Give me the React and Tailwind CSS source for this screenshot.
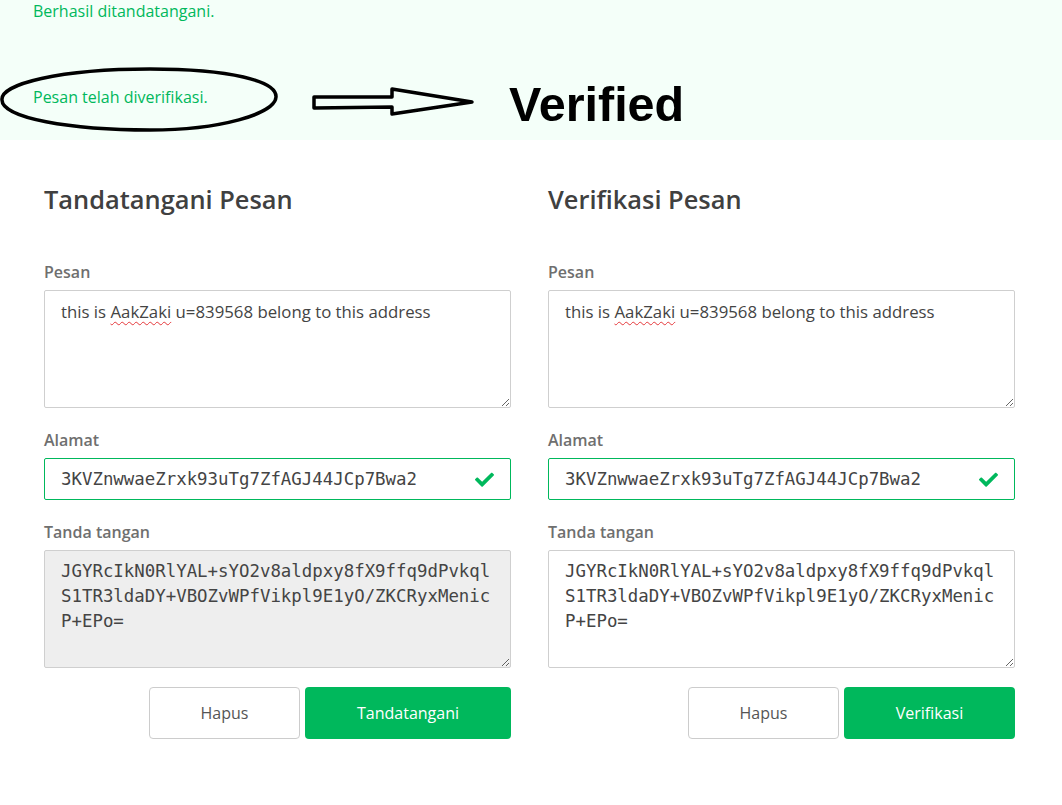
import React from "react";

const SANS = { fontFamily: '"Open Sans", "Noto Sans", Arial, sans-serif' };
const MONO = { fontFamily: '"DejaVu Sans Mono", "Liberation Mono", monospace' };

function Check() {
  return (
    <svg width="19" height="15" viewBox="0 0 512 400" className="shrink-0">
      <path
        fill="#00b85c"
        d="M173.9 389.8L7.5 223.4c-10-10-10-26.2 0-36.2l36.2-36.2c10-10 26.2-10 36.2 0L192 263.1 432.1 23c10-10 26.2-10 36.2 0l36.2 36.2c10 10 10 26.2 0 36.2L210.1 389.8c-10 10-26.2 10-36.2 0z"
      />
    </svg>
  );
}

function Panel({ title, sigBg, action, actionW }) {
  return (
    <div className="flex flex-col">
      <h2 className="text-[25.4px] font-semibold text-[#404040] leading-[34px] mt-[42px]" style={SANS}>
        {title}
      </h2>
      <label className="mt-[45px] text-[16px] font-semibold text-[#6f6f6f] leading-[22px]" style={SANS}>
        Pesan
      </label>
      <div
        className="mt-[7px] h-[118px] w-full border border-[#cfcfcf] rounded-[2px] bg-white px-4 pt-[9px] text-[16.8px] leading-[24px] text-[#444] resize overflow-auto"
        style={SANS}
      >
        this is{" "}
        <span className="underline decoration-wavy decoration-[#e5383b] decoration-1 underline-offset-[3px]">
          AakZaki
        </span>{" "}
        u=839568 belong to this address
      </div>
      <label className="mt-[21px] text-[16px] font-semibold text-[#6f6f6f] leading-[22px]" style={SANS}>
        Alamat
      </label>
      <div className="mt-[7px] h-[42px] w-full border border-[#00b85c] rounded-[2px] bg-white pl-4 pr-[16px] flex items-center justify-between">
        <span className="text-[17.4px] text-[#444]" style={MONO}>
          3KVZnwwaeZrxk93uTg7ZfAGJ44JCp7Bwa2
        </span>
        <Check />
      </div>
      <label className="mt-[21px] text-[16px] font-semibold text-[#6f6f6f] leading-[22px]" style={SANS}>
        Tanda tangan
      </label>
      <div
        className={`mt-[7px] h-[118px] w-full border border-[#cfcfcf] rounded-[2px] px-4 pt-[8px] text-[17.4px] leading-[25px] text-[#444] resize overflow-auto break-all ${sigBg}`}
        style={MONO}
      >
        JGYRcIkN0RlYAL+sYO2v8aldpxy8fX9ffq9dPvkqlS1TR3ldaDY+VBOZvWPfVikpl9E1yO/ZKCRyxMenicP+EPo=
      </div>
      <div className="mt-[19px] flex justify-end gap-[5px]" style={SANS}>
        <button className="h-[52px] w-[151px] border border-[#cccccc] rounded-[4px] bg-white text-[16px] text-[#555]">
          Hapus
        </button>
        <button
          className="h-[52px] rounded-[4px] bg-[#00b85c] text-[16px] text-white"
          style={{ width: actionW }}
        >
          {action}
        </button>
      </div>
    </div>
  );
}

export default function App() {
  return (
    <div className="min-h-[805px] w-[1062px] bg-white" style={SANS}>
      <div className="relative h-[140px] bg-[#f4fff9]">
        <p className="absolute left-[33px] top-[0px] text-[16px] leading-[22px] text-[#00b85c]">Berhasil ditandatangani.</p>
        <p className="absolute left-[33px] top-[86px] text-[16px] leading-[22px] text-[#00b85c]">Pesan telah diverifikasi.</p>
        <svg className="absolute left-0 top-[64px]" width="290" height="72" viewBox="0 0 290 72">
          <path
            d="M 2 36 C 0 20, 60 5, 150 5 C 230 5, 277 17, 276 33 C 275 50, 220 66, 150 66 C 70 66, 2 54, 2 36 Z"
            fill="none"
            stroke="#000"
            strokeWidth="3.5"
          />
        </svg>
        <svg className="absolute left-[310px] top-[84px]" width="170" height="36" viewBox="0 0 170 36">
          <path
            d="M 4 13 L 82 13 L 82 5 L 162 18 L 82 30 L 82 23 L 4 24 Z"
            fill="none"
            stroke="#000"
            strokeWidth="3.5"
            strokeLinejoin="round"
          />
        </svg>
        <span
          className="absolute left-[509px] top-[76px] text-[48.5px] font-bold leading-[56px] text-black"
          style={{ fontFamily: '"Liberation Sans", Arial, sans-serif' }}
        >
          Verified
        </span>
      </div>
      <div className="ml-[44px] w-[971px] grid grid-cols-2 gap-[37px]">
        <Panel title="Tandatangani Pesan" sigBg="bg-[#eeeeee]" action="Tandatangani" actionW={206} />
        <Panel title="Verifikasi Pesan" sigBg="bg-white" action="Verifikasi" actionW={171} />
      </div>
    </div>
  );
}
